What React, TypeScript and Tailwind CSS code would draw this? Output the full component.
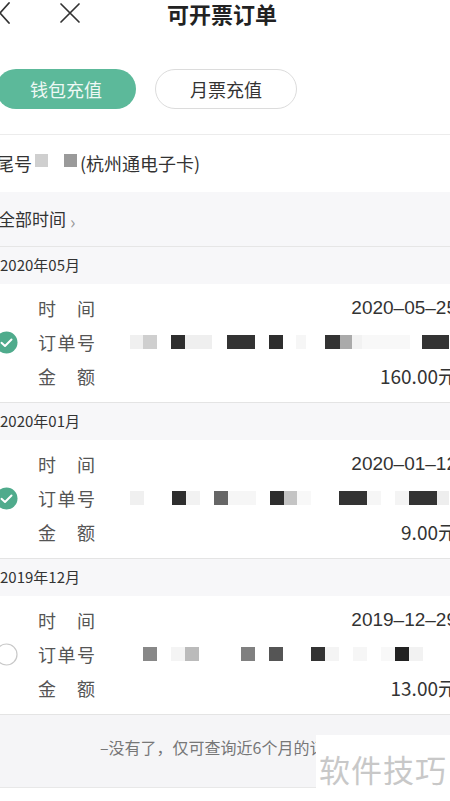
import React from "react";

type Block = { w: number; c: string };

const font = { fontFamily: '"Noto Sans CJK SC", "Liberation Sans", sans-serif' };
const numFont = { fontFamily: '"Liberation Sans", "Noto Sans CJK SC", sans-serif' };

const orders: { month: string; date: string; amount: string; checked: boolean; blocks: Block[] }[] = [
  {
    month: "2020年05月",
    date: "2020–05–25",
    amount: "160.00元",
    checked: true,
    blocks: [
      { w: 13, c: "#f0f0f0" },
      { w: 14, c: "#cfcfcf" },
      { w: 14, c: "#fff" },
      { w: 14, c: "#2e2e2e" },
      { w: 27, c: "#efefef" },
      { w: 15, c: "#fff" },
      { w: 28, c: "#333" },
      { w: 14, c: "#fff" },
      { w: 14, c: "#2e2e2e" },
      { w: 13, c: "#fff" },
      { w: 10, c: "#f6f6f6" },
      { w: 19, c: "#fff" },
      { w: 15, c: "#333" },
      { w: 12, c: "#aaa" },
      { w: 10, c: "#f2f2f2" },
      { w: 48, c: "#f8f8f8" },
      { w: 12, c: "#fff" },
      { w: 27, c: "#333" },
    ],
  },
  {
    month: "2020年01月",
    date: "2020–01–12",
    amount: "9.00元",
    checked: true,
    blocks: [
      { w: 14, c: "#f0f0f0" },
      { w: 28, c: "#fff" },
      { w: 14, c: "#2e2e2e" },
      { w: 14, c: "#f2f2f2" },
      { w: 14, c: "#fff" },
      { w: 14, c: "#666" },
      { w: 28, c: "#f6f6f6" },
      { w: 14, c: "#fff" },
      { w: 14, c: "#2e2e2e" },
      { w: 13, c: "#c4c4c4" },
      { w: 14, c: "#f8f8f8" },
      { w: 28, c: "#fff" },
      { w: 28, c: "#333" },
      { w: 14, c: "#f6f6f6" },
      { w: 14, c: "#fff" },
      { w: 14, c: "#f4f4f4" },
      { w: 28, c: "#333" },
      { w: 12, c: "#eee" },
    ],
  },
  {
    month: "2019年12月",
    date: "2019–12–29",
    amount: "13.00元",
    checked: false,
    blocks: [
      { w: 13, c: "#fff" },
      { w: 14, c: "#888" },
      { w: 14, c: "#fff" },
      { w: 14, c: "#f4f4f4" },
      { w: 14, c: "#bbb" },
      { w: 42, c: "#fff" },
      { w: 14, c: "#808080" },
      { w: 14, c: "#fff" },
      { w: 14, c: "#555" },
      { w: 28, c: "#fff" },
      { w: 14, c: "#333" },
      { w: 14, c: "#f4f4f4" },
      { w: 14, c: "#fff" },
      { w: 14, c: "#f6f6f6" },
      { w: 14, c: "#fff" },
      { w: 14, c: "#f8f8f8" },
      { w: 14, c: "#222" },
      { w: 14, c: "#f2f2f2" },
    ],
  },
];

function Check({ checked }: { checked: boolean }) {
  if (checked) {
    return (
      <svg width="23" height="23" viewBox="0 0 23 23" className="shrink-0">
        <circle cx="11.5" cy="11.5" r="11" fill="#4fab8c" />
        <path d="M6.5 11.8 L10 15 L16.5 8.5" stroke="#fff" strokeWidth="2" fill="none" strokeLinecap="round" strokeLinejoin="round" />
      </svg>
    );
  }
  return (
    <svg width="23" height="23" viewBox="0 0 23 23" className="shrink-0">
      <circle cx="11.5" cy="11.5" r="10.5" fill="#fff" stroke="#c8c8c8" strokeWidth="1.2" />
    </svg>
  );
}

function Label({ chars }: { chars: string[] }) {
  return (
    <div className="flex w-[57px] justify-between text-[18px] text-[#555]">
      {chars.map((c, i) => (
        <span key={i}>{c}</span>
      ))}
    </div>
  );
}

export default function App() {
  return (
    <div className="w-[450px] h-[801px] overflow-hidden bg-white" style={font}>
      {/* header */}
      <div className="flex h-[25px] items-center">
        <svg width="16" height="24" viewBox="0 0 16 24" className="ml-[-4px]">
          <path d="M13 2 L4 12 L13 22" stroke="#333" strokeWidth="1.8" fill="none" strokeLinecap="round" strokeLinejoin="round" />
        </svg>
        <svg width="22" height="22" viewBox="0 0 22 22" className="ml-[47px]">
          <path d="M2 2 L20 20 M20 2 L2 20" stroke="#333" strokeWidth="1.7" strokeLinecap="round" />
        </svg>
        <div className="ml-[86px] text-[22px] font-semibold text-[#222] leading-none">可开票订单</div>
      </div>

      {/* tabs */}
      <div className="mt-[44px] flex items-center gap-[19px]">
        <div className="flex h-[40px] w-[140px] ml-[-4px] items-center justify-center rounded-full bg-[#5cb99a] text-[18px] text-[#eef8f4]">
          钱包充值
        </div>
        <div className="flex h-[40px] w-[142px] items-center justify-center rounded-full border border-[#dcdcdc] text-[18px] text-[#333]">
          月票充值
        </div>
      </div>

      <div className="mt-[25px] h-px bg-[#ececec]" />

      {/* card row */}
      <div className="flex h-[57px] items-center text-[18px] text-[#333] ml-[-4px]">
        <span>尾号</span>
        <span className="ml-[3px] h-[13px] w-[13px] bg-[#cfcfcf] -mt-[6px]" />
        <span className="ml-[16px] h-[13px] w-[13px] bg-[#9a9a9a] -mt-[6px]" />
        <span className="ml-[3px]">(杭州通电子卡)</span>
      </div>

      {/* filter */}
      <div className="flex h-[55px] items-center bg-[#f7f7f9] border-b border-[#e6e6e6] text-[17px] text-[#333] ml-[-2px]">
        全部时间
        <span className="ml-[4px] mt-[3px] text-[18px] leading-none text-[#999]">›</span>
      </div>

      {orders.map((o, idx) => (
        <div key={idx}>
          <div className="flex h-[37px] items-center bg-[#f7f7f9] text-[15px] text-[#333]">
            {o.month}
          </div>
          <div className="bg-white pt-[7px] pb-[9px] border-b border-[#e4e4e4] w-[462px] ml-[-5px] flex items-center">
            <div className="w-[43px] flex items-center">
              <Check checked={o.checked} />
            </div>
            <div className="flex flex-col">
              <div className="h-[34px] flex items-center"><Label chars={["时", "间"]} /></div>
              <div className="h-[34px] flex items-center"><Label chars={["订", "单", "号"]} /></div>
              <div className="h-[34px] flex items-center"><Label chars={["金", "额"]} /></div>
            </div>
            <div className="flex flex-1 flex-col items-end">
              <div className="h-[34px] flex items-center text-[19px] text-[#333]" style={numFont}>{o.date}</div>
              <div className="h-[34px] flex items-center w-full pl-[35px]">
                {o.blocks.map((b, i) => (
                  <span key={i} className="h-[14px] shrink-0" style={{ width: b.w, background: b.c }} />
                ))}
              </div>
              <div className="h-[34px] flex items-center text-[19px] text-[#333]">{o.amount}</div>
            </div>
          </div>
        </div>
      ))}

      {/* footer */}
      <div className="flex h-[73px] items-start justify-center bg-[#f5f5f7] pt-[20px] text-[16px] text-[#777] border-b border-[#e8e8e8] whitespace-nowrap">
        –没有了，仅可查询近6个月的订单–
      </div>

      {/* watermark */}
      <div className="flex justify-end -mt-[53px] relative">
        <div className="flex h-[68px] w-[134px] items-center justify-center bg-white text-[31px] text-[#c8c8c8] tracking-[1px]">
          软件技巧
        </div>
      </div>
    </div>
  );
}
